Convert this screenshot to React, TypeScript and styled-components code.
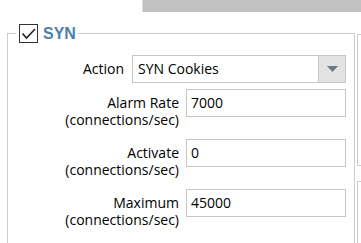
import React from "react";
import styled, { createGlobalStyle } from "styled-components";

const Global = createGlobalStyle`
  html, body { margin: 0; padding: 0; background: #ffffff; }
  body { width: 361px; height: 243px; overflow: hidden; font-family: "Open Sans", "Noto Sans", sans-serif; }
`;

const Page = styled.div`
  width: 361px;
  height: 243px;
  display: flex;
  flex-direction: column;
  overflow: hidden;
`;

const TopStrip = styled.div`
  display: flex;
  flex-shrink: 0;
  height: 12px;
  padding-left: 142px;
`;

const GrayBar = styled.div`
  flex: 1;
  background: #c2c2c2;
  border-left: 1px solid #dcdcdc;
`;

const Main = styled.div`
  display: flex;
  flex-shrink: 0;
  align-items: flex-start;
  margin-top: 12px;
  padding-left: 7px;
  gap: 2px;
`;

const Group = styled.fieldset`
  width: 348px;
  box-sizing: border-box;
  margin: 0;
  padding: 12px 8px 40px 0;
  border: 1px solid #cdcdcd;
  min-width: 0;
`;

const Legend = styled.legend`
  margin-left: 8px;
  padding: 0 2px 0 3px;
  display: flex;
  align-items: center;
  gap: 5px;
`;

const CheckBox = styled.span`
  width: 19px;
  height: 19px;
  box-sizing: border-box;
  border: 1px solid #333333;
  background: #ffffff;
  display: flex;
  align-items: center;
  justify-content: center;
`;

const GroupTitle = styled.span`
  font-family: "Liberation Sans", Arial, sans-serif;
  font-weight: bold;
  font-size: 16px;
  line-height: 19px;
  color: #4e7ea8;
`;

const Fields = styled.div`
  display: flex;
  flex-direction: column;
  gap: 6px;
`;

const Row = styled.div<{ $labelWidth: number; $gap: number }>`
  display: grid;
  grid-template-columns: ${(p) => p.$labelWidth}px 1fr;
  column-gap: ${(p) => p.$gap}px;
  align-items: baseline;
  min-height: 28px;
`;

const FieldRow = styled(Row)`
  height: 44px;
  align-content: start;
`;

const Label = styled.div`
  text-align: right;
  font-size: 14px;
  line-height: 17px;
  color: #000000;
`;

const Select = styled.div`
  display: flex;
  height: 28px;
  box-sizing: border-box;
  border: 1px solid #c6c6c6;
  background: #ffffff;
`;

const SelectText = styled.div`
  flex: 1;
  padding-left: 5px;
  font-size: 14px;
  line-height: 26px;
  color: #000000;
`;

const SelectButton = styled.div`
  width: 27px;
  box-sizing: border-box;
  border-left: 1px solid #c6c6c6;
  background: #e3e3e3;
  display: flex;
  align-items: center;
  justify-content: center;
`;

const Input = styled.div`
  height: 28px;
  box-sizing: border-box;
  border: 1px solid #c6c6c6;
  padding-left: 4px;
  font-size: 14px;
  line-height: 26px;
  color: #000000;
  background: #ffffff;
`;

const SideColumn = styled.div`
  margin-top: 10px;
  width: 4px;
  display: flex;
  flex-direction: column;
  gap: 15px;
`;

const SideBox = styled.div<{ $h: number }>`
  height: ${(p) => p.$h}px;
  box-sizing: border-box;
  border: 1px solid #cdcdcd;
  border-right: none;
`;

const fields = [
  { label: "Alarm Rate", value: "7000" },
  { label: "Activate", value: "0" },
  { label: "Maximum", value: "45000" },
];

export default function App() {
  return (
    <Page>
      <Global />
      <TopStrip>
        <GrayBar />
      </TopStrip>
      <Main>
        <Group>
          <Legend>
            <CheckBox>
              <svg width="17" height="17" viewBox="0 0 17 17">
                <path d="M2.5 8.5 L6.5 13 L15 4" fill="none" stroke="#222" strokeWidth="1.6" />
              </svg>
            </CheckBox>
            <GroupTitle>SYN</GroupTitle>
          </Legend>
          <Fields>
            <Row $labelWidth={116} $gap={8}>
              <Label>Action</Label>
              <Select>
                <SelectText>SYN Cookies</SelectText>
                <SelectButton>
                  <svg width="11" height="6" viewBox="0 0 11 6">
                    <path d="M0 0 L11 0 L5.5 6 Z" fill="#6b7985" />
                  </svg>
                </SelectButton>
              </Select>
            </Row>
            {fields.map((f) => (
              <FieldRow key={f.label} $labelWidth={171} $gap={7}>
                <Label>
                  {f.label}
                  <br />
                  (connections/sec)
                </Label>
                <Input>{f.value}</Input>
              </FieldRow>
            ))}
          </Fields>
        </Group>
        <SideColumn>
          <SideBox $h={132} />
          <SideBox $h={100} />
        </SideColumn>
      </Main>
    </Page>
  );
}
